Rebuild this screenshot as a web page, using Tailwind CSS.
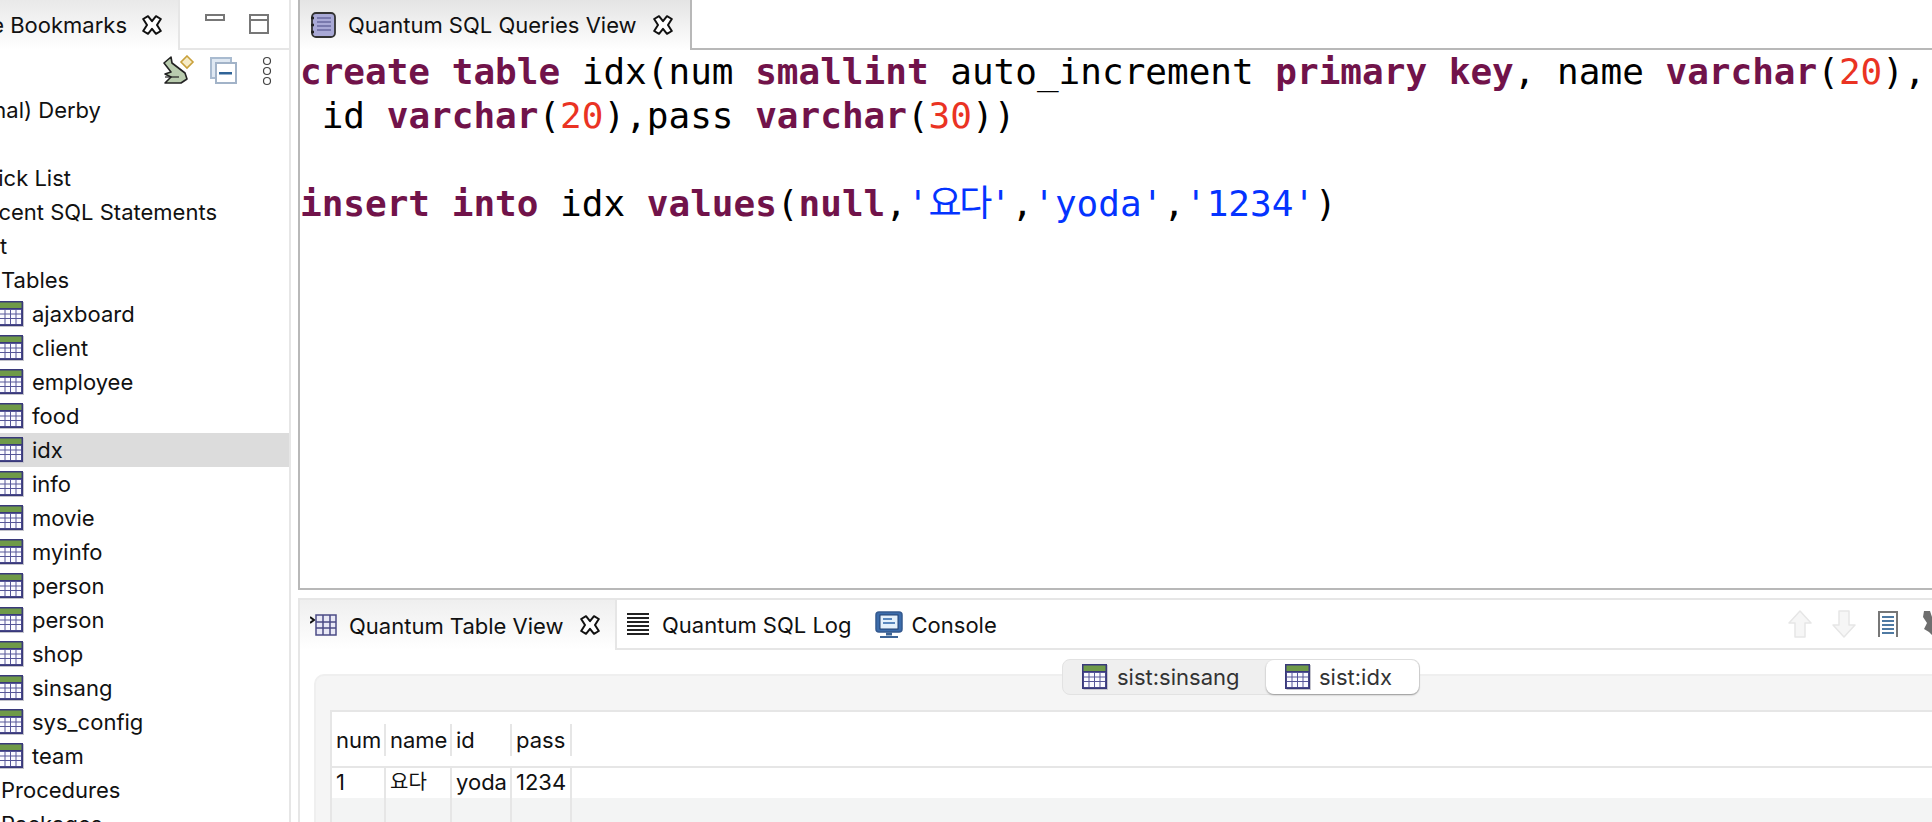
<!DOCTYPE html>
<html lang="ko">
<head>
  <meta charset="UTF-8">
  <title>Quantum SQL Queries View</title>
  <script src="https://cdn.jsdelivr.net/npm/@tailwindcss/browser@4"></script>
</head>
<body class="bg-white overflow-hidden">
  <svg class="hidden">
    <symbol id="tbl" viewBox="0 0 26 26">
      <rect x="1.500" y="1" width="24.500" height="25" fill="#c4c4cc"/>
      <rect x="0" y="0" width="25" height="25" fill="#39397a"/>
      <rect x="1.500" y="1.500" width="22" height="5.500" fill="#6f9a48"/>
      <rect x="1.500" y="8" width="22" height="15.500" fill="#565698"/>
      <path d="M2 9h4.500v3.500H2zM7.500 9H12v3.500H7.500zM13 9h4.500v3.500H13zM18.500 9H23v3.500h-4.500zM2 13.500h4.500V17H2zM7.500 13.500H12V17H7.500zM13 13.500h4.500V17H13zM18.500 13.500H23V17h-4.500zM2 18h4.500v5H2zM7.500 18H12v5H7.500zM13 18h4.500v5H13zM18.500 18H23v5h-4.500z" fill="#fbfbff"/>
    </symbol>
    <symbol id="cls" viewBox="0 0 20 20">
      <path d="M1.200 4 6 1.200l4 5 4-5L18.800 4 15 10l3.800 6-4.800 2.800-4-5-4 5L1.200 16 5 10z" fill="#fff" stroke="#111" stroke-width="2" stroke-linejoin="round"/>
    </symbol>
  </svg>

  <div class="flex h-[822px] w-[1932px] overflow-hidden font-['Inter','Noto_Sans_CJK_KR',sans-serif] text-[22px] text-[#111]">
    <!-- left: bookmarks -->
    <aside class="w-[291px] shrink-0 border-r-2 border-[#e6e6e6] flex flex-col overflow-hidden">
      <div class="h-[50px] shrink-0 flex">
        <div class="w-[180px] shrink-0 flex items-center justify-end pr-[16px] gap-[15px] bg-gradient-to-b from-[#e9e9e9] to-white border-r-2 border-[#e6e6e6] whitespace-nowrap overflow-hidden">
          <span>e Bookmarks</span>
          <svg class="w-[20px] h-[20px] shrink-0"><use href="#cls"/></svg>
        </div>
        <div class="flex-1 border-b-2 border-[#e6e6e6] flex items-start pl-[25px] gap-[24px] pt-[14px]">
          <div class="w-[20px] h-[7px] border-2 border-[#777]"></div>
          <svg width="20" height="20" viewBox="0 0 20 20" class="shrink-0"><path d="M1 1h18v18H1zM1 6h18" fill="none" stroke="#777" stroke-width="2"/></svg>
        </div>
      </div>
      <div class="h-[40px] shrink-0 flex items-center justify-end pr-[17px] pt-[2px]">
        <svg width="32" height="32" viewBox="0 0 32 32" class="mr-[15px]">
          <path d="M1 8 8 2l1 6 13 10 2 6-6 4H2l6-6-6-3 6-2z" fill="#b9ccae" stroke="#222" stroke-width="1.600" stroke-linejoin="round"/>
          <path d="M2 22h14" stroke="#222" stroke-width="1.200"/>
          <path d="M24 1l6 6-6 6-6-6z" fill="#f6ebc6" stroke="#c9a13c" stroke-width="1.600"/>
        </svg>
        <svg width="28" height="28" viewBox="0 0 28 28" class="mr-[24px]">
          <rect x="1" y="1" width="20" height="20" fill="#dfe8f2" stroke="#a9bbd0" stroke-width="2"/>
          <rect x="6" y="6" width="20" height="20" fill="#fff" stroke="#a2b3c8" stroke-width="2"/>
          <rect x="9" y="15" width="13" height="2.500" fill="#2f6397"/>
        </svg>
        <svg width="10" height="30" viewBox="0 0 10 30">
          <circle cx="5" cy="5" r="3.500" fill="#fff" stroke="#444" stroke-width="1.200"/>
          <circle cx="5" cy="15" r="3.500" fill="#fff" stroke="#444" stroke-width="1.200"/>
          <circle cx="5" cy="25" r="3.500" fill="#fff" stroke="#444" stroke-width="1.200"/>
        </svg>
      </div>
      <ul class="flex-1 whitespace-nowrap overflow-hidden">
        <li class="h-[34px] flex items-center justify-end w-[101px] mt-[3px] mb-[34px]"><span>nal) Derby</span></li>
        <li class="h-[34px] flex items-center justify-end w-[71px]"><span>ick List</span></li>
        <li class="h-[34px] flex items-center w-[217px] justify-end"><span>cent SQL Statements</span></li>
        <li class="h-[34px] flex items-center"><span>t</span></li>
        <li class="h-[34px] flex items-center pl-[1px]"><span>Tables</span></li>
        <li class="h-[34px] flex items-center gap-[8px]"><svg class="w-[26px] h-[26px] -ml-[2px]"><use href="#tbl"/></svg>ajaxboard</li>
        <li class="h-[34px] flex items-center gap-[8px]"><svg class="w-[26px] h-[26px] -ml-[2px]"><use href="#tbl"/></svg>client</li>
        <li class="h-[34px] flex items-center gap-[8px]"><svg class="w-[26px] h-[26px] -ml-[2px]"><use href="#tbl"/></svg>employee</li>
        <li class="h-[34px] flex items-center gap-[8px]"><svg class="w-[26px] h-[26px] -ml-[2px]"><use href="#tbl"/></svg>food</li>
        <li class="h-[34px] flex items-center gap-[8px] bg-[#dcdcdc]"><svg class="w-[26px] h-[26px] -ml-[2px]"><use href="#tbl"/></svg>idx</li>
        <li class="h-[34px] flex items-center gap-[8px]"><svg class="w-[26px] h-[26px] -ml-[2px]"><use href="#tbl"/></svg>info</li>
        <li class="h-[34px] flex items-center gap-[8px]"><svg class="w-[26px] h-[26px] -ml-[2px]"><use href="#tbl"/></svg>movie</li>
        <li class="h-[34px] flex items-center gap-[8px]"><svg class="w-[26px] h-[26px] -ml-[2px]"><use href="#tbl"/></svg>myinfo</li>
        <li class="h-[34px] flex items-center gap-[8px]"><svg class="w-[26px] h-[26px] -ml-[2px]"><use href="#tbl"/></svg>person</li>
        <li class="h-[34px] flex items-center gap-[8px]"><svg class="w-[26px] h-[26px] -ml-[2px]"><use href="#tbl"/></svg>person</li>
        <li class="h-[34px] flex items-center gap-[8px]"><svg class="w-[26px] h-[26px] -ml-[2px]"><use href="#tbl"/></svg>shop</li>
        <li class="h-[34px] flex items-center gap-[8px]"><svg class="w-[26px] h-[26px] -ml-[2px]"><use href="#tbl"/></svg>sinsang</li>
        <li class="h-[34px] flex items-center gap-[8px]"><svg class="w-[26px] h-[26px] -ml-[2px]"><use href="#tbl"/></svg>sys_config</li>
        <li class="h-[34px] flex items-center gap-[8px]"><svg class="w-[26px] h-[26px] -ml-[2px]"><use href="#tbl"/></svg>team</li>
        <li class="h-[34px] flex items-center pl-[1px]">Procedures</li>
        <li class="h-[34px] flex items-center pl-[1px]">Packages</li>
      </ul>
    </aside>

    <!-- right -->
    <main class="flex-1 min-w-0 pl-[7px] flex flex-col">
      <section class="h-[590px] shrink-0 border-l-2 border-b-2 border-[#b8b8b8] flex flex-col overflow-hidden">
        <div class="h-[50px] shrink-0 flex">
          <div class="w-[392px] shrink-0 flex items-center pl-[10px] bg-gradient-to-b from-[#e4e4e4] to-white border-r-2 border-[#b8b8b8]">
            <svg width="26" height="26" viewBox="0 0 26 26" class="shrink-0">
              <rect x="2" y="1" width="23" height="24" rx="4" fill="#a9a9d6" stroke="#333" stroke-width="1.800"/>
              <path d="M7 6h14M7 10h14M7 14h14M7 18h14" stroke="#6a6aa0" stroke-width="1.500"/>
              <path d="M1 6h3M1 13h3M1 20h3" stroke="#222" stroke-width="2.500"/>
            </svg>
            <span class="ml-[12px] whitespace-nowrap">Quantum SQL Queries View</span>
            <svg class="w-[20px] h-[20px] shrink-0 ml-[16px]"><use href="#cls"/></svg>
          </div>
          <div class="flex-1 border-b-2 border-[#b8b8b8]"></div>
        </div>
        <pre class="font-['DejaVu_Sans_Mono','Noto_Sans_CJK_KR',monospace] text-[36px] leading-[44px] text-black"><b class="text-[#71134a]">create table</b> idx(num <b class="text-[#71134a]">smallint</b> auto_increment <b class="text-[#71134a]">primary key</b>, name <b class="text-[#71134a]">varchar</b>(<span class="text-[#ea3323]">20</span>),
 id <b class="text-[#71134a]">varchar</b>(<span class="text-[#ea3323]">20</span>),pass <b class="text-[#71134a]">varchar</b>(<span class="text-[#ea3323]">30</span>))

<b class="text-[#71134a]">insert into</b> idx <b class="text-[#71134a]">values</b>(<b class="text-[#71134a]">null</b>,<span class="text-[#0433ff]">'<span class="tracking-[-2.500px]">요다</span>'</span>,<span class="text-[#0433ff]">'yoda'</span>,<span class="text-[#0433ff]">'1234'</span>)</pre>
      </section>

      <section class="mt-[8px] flex-1 min-h-0 border-l-2 border-t-2 border-[#e6e6e6] flex flex-col overflow-hidden">
        <div class="h-[50px] shrink-0 flex">
          <div class="w-[317px] shrink-0 flex items-center pl-[10px] bg-gradient-to-b from-[#efefef] to-white border-r-2 border-[#e6e6e6]">
            <svg width="28" height="24" viewBox="0 0 28 24" class="shrink-0">
              <path d="M0 4l4 3-4 3" fill="none" stroke="#111" stroke-width="2"/>
              <path d="M6 2h20v20H6zM6 9h20M6 15h20M13 2v20M20 2v20" fill="#e9e9f6" stroke="#4c4c86" stroke-width="1.500"/>
            </svg>
            <span class="ml-[11px] pt-[2px] whitespace-nowrap">Quantum Table View</span>
            <svg class="w-[20px] h-[20px] shrink-0 ml-[16px]"><use href="#cls"/></svg>
          </div>
          <div class="flex-1 border-b-2 border-[#e6e6e6] flex items-center pl-[9px]">
            <svg width="24" height="24" viewBox="0 0 24 24" class="shrink-0">
              <path d="M1 2h22M1 6h22M1 10h22M1 14h22M1 18h22M1 22h22" stroke="#222" stroke-width="1.800"/>
            </svg>
            <span class="ml-[12px] pt-[2px]">Quantum SQL Log</span>
            <svg width="28" height="27" viewBox="0 0 28 27" class="ml-[23px] shrink-0">
              <rect x="1" y="1" width="26" height="20" rx="3" fill="#3c6cab" stroke="#34598f" stroke-width="1.500"/>
              <rect x="5" y="4" width="18" height="14" fill="#e4f0fb" stroke="#1f3f70" stroke-width="1"/>
              <path d="M8 8h9M8 12h12" stroke="#5a87bd" stroke-width="2"/>
              <path d="M11 23h6" stroke="#3c6496" stroke-width="3"/>
              <path d="M5 26h18" stroke="#3c6496" stroke-width="2"/>
            </svg>
            <span class="ml-[9px] pt-[2px]">Console</span>
            <div class="ml-auto flex items-center -mr-[12px]">
              <svg width="24" height="28" viewBox="0 0 24 28"><path d="M12 1 23 13h-6v14H7V13H1z" fill="#f6f6f6" stroke="#e6e6e6" stroke-width="1.500" stroke-linejoin="round"/></svg>
              <svg width="24" height="28" viewBox="0 0 24 28" class="ml-[20px]"><path d="M12 27 23 15h-6V1H7v14H1z" fill="#f6f6f6" stroke="#e6e6e6" stroke-width="1.500" stroke-linejoin="round"/></svg>
              <svg width="20" height="26" viewBox="0 0 20 26" class="ml-[22px]"><path d="M1 26V1h18v25" fill="none" stroke="#777" stroke-width="2"/><path d="M4 6h12M4 10h12M4 14h12M4 18h12M4 22h12" stroke="#4f7aa3" stroke-width="2"/></svg>
              <svg width="24" height="28" viewBox="0 0 24 28" class="ml-[22px]"><path d="M4 1h6l2 6 6-2 4 9-5 3 3 6-6 4-5-5-5-3 3-6-4-6z" fill="#6e6e6e"/></svg>
            </div>
          </div>
        </div>

        <div class="relative mt-[24px] ml-[14px] flex-1 min-h-0 bg-[#f5f5f5] border-t-2 border-l-2 border-[#efefef] rounded-tl-[10px] pl-[14px] pt-[34px]">
          <div class="absolute left-[746px] -top-[17px] w-[358px] h-[36px] rounded-[8px] bg-[#efefef] border border-[#e2e2e2] flex items-center">
            <div class="w-[203px] flex items-center pl-[19px] gap-[9px] text-[#333]"><svg class="w-[26px] h-[26px] shrink-0"><use href="#tbl"/></svg>sist:sinsang</div>
            <div class="flex-1 h-[34px] bg-white rounded-[8px] shadow-[0_1px_2px_rgba(0,0,0,0.35)] flex items-center pl-[19px] gap-[8px] text-[#333]"><svg class="w-[26px] h-[26px] shrink-0"><use href="#tbl"/></svg>sist:idx</div>
          </div>
          <div class="h-full bg-white border-t-2 border-l-2 border-[#e6e6e6]">
            <div class="h-[56px] flex border-b-2 border-[#e6e6e6]">
              <div class="w-[54px] pl-[4px] pt-[9px] leading-[38px] relative">num<i class="absolute right-0 top-[12px] h-[32px] w-[2px] bg-[#e6e6e6]"></i></div>
              <div class="w-[66px] pl-[4px] pt-[9px] leading-[38px] relative">name<i class="absolute right-0 top-[12px] h-[32px] w-[2px] bg-[#e6e6e6]"></i></div>
              <div class="w-[60px] pl-[4px] pt-[9px] leading-[38px] relative">id<i class="absolute right-0 top-[12px] h-[32px] w-[2px] bg-[#e6e6e6]"></i></div>
              <div class="w-[60px] pl-[4px] pt-[9px] leading-[38px] relative">pass<i class="absolute right-0 top-[12px] h-[32px] w-[2px] bg-[#e6e6e6]"></i></div>
            </div>
            <div class="h-[30px] flex leading-[28px]">
              <div class="w-[54px] pl-[4px] border-r-2 border-[#e6e6e6]">1</div>
              <div class="w-[66px] pl-[4px] border-r-2 border-[#e6e6e6] text-[20px]">요다</div>
              <div class="w-[60px] pl-[4px] border-r-2 border-[#e6e6e6]">yoda</div>
              <div class="w-[60px] pl-[4px] border-r-2 border-[#e6e6e6]">1234</div>
            </div>
            <div class="h-[30px] flex bg-[#f3f4f4]">
              <div class="w-[54px] border-r-2 border-[#e6e6e6]"></div>
              <div class="w-[66px] border-r-2 border-[#e6e6e6]"></div>
              <div class="w-[60px] border-r-2 border-[#e6e6e6]"></div>
              <div class="w-[60px] border-r-2 border-[#e6e6e6]"></div>
            </div>
          </div>
        </div>
      </section>
    </main>
  </div>
</body>
</html>
